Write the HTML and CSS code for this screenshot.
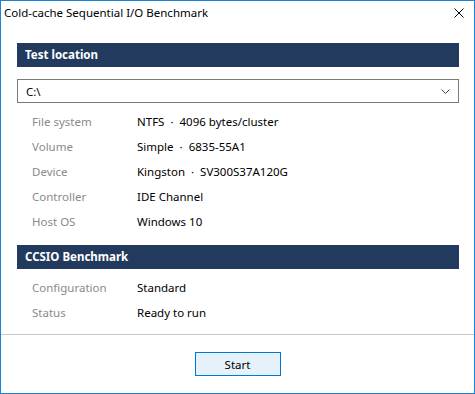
FILE: index.html
```html
<!DOCTYPE html>
<html lang="en">
<head>
    <meta charset="UTF-8">
    <title>Cold-cache Sequential I/O Benchmark</title>
    <link rel="stylesheet" href="styles.css">
</head>
<body>
    <div class="window">
        <div class="titlebar">
            <span class="title">Cold-cache Sequential I/O Benchmark</span>
            <svg class="close" width="10" height="10" viewBox="0 0 10 10">
                <path d="M0.5 0.5 L9.5 9.5 M9.5 0.5 L0.5 9.5" stroke="#000" stroke-width="1" fill="none"/>
            </svg>
        </div>
        <div class="content">
            <div class="section-header first">Test location</div>
            <div class="combo">
                <span>C:\</span>
                <svg class="chevron" width="9" height="5" viewBox="0 0 9 5">
                    <path d="M0.5 0.5 L4.5 4.5 L8.5 0.5" stroke="#404040" stroke-width="1" fill="none"/>
                </svg>
            </div>
            <div class="rows">
                <div class="row"><span class="label">File system</span><span class="value">NTFS <span class="dot">·</span> 4096 bytes/cluster</span></div>
                <div class="row"><span class="label">Volume</span><span class="value">Simple <span class="dot">·</span> 6835-55A1</span></div>
                <div class="row"><span class="label">Device</span><span class="value">Kingston <span class="dot">·</span> SV300S37A120G</span></div>
                <div class="row"><span class="label">Controller</span><span class="value">IDE Channel</span></div>
                <div class="row"><span class="label">Host OS</span><span class="value">Windows 10</span></div>
            </div>
            <div class="section-header second">CCSIO Benchmark</div>
            <div class="rows bench">
                <div class="row"><span class="label">Configuration</span><span class="value">Standard</span></div>
                <div class="row"><span class="label">Status</span><span class="value">Ready to run</span></div>
            </div>
        </div>
        <div class="footer">
            <button class="start-button">Start</button>
        </div>
    </div>
</body>
</html>
```

FILE: styles.css
```css
body {
    margin: 0;
    padding: 0;
    font-family: "Noto Sans", "Open Sans", sans-serif;
    font-size: 11.5px;
    color: #000;
    background-color: #fff;
}
.window {
    width: 475px;
    height: 394px;
    box-sizing: border-box;
    border: 1px solid #1883d7;
    display: flex;
    flex-direction: column;
    background-color: #fff;
}
.titlebar {
    height: 30px;
    box-sizing: border-box;
    display: flex;
    align-items: center;
    justify-content: space-between;
    padding: 0 10px 6px 3px;
}
.title {
    line-height: 16px;
}
.content {
    flex: 1;
    padding: 12px 15px 0 16px;
}
.section-header {
    height: 24px;
    line-height: 24px;
    background-color: #223a5e;
    color: #fff;
    font-weight: bold;
    padding-left: 8px;
}
.section-header.second {
    margin-top: 11px;
}
.combo {
    margin-top: 12px;
    height: 24px;
    box-sizing: border-box;
    border: 1px solid #7a7a7a;
    display: flex;
    align-items: center;
    justify-content: space-between;
    padding: 0 8px 0 8px;
}
.rows {
    margin-top: 6px;
}
.row {
    display: flex;
    height: 25px;
    align-items: center;
}
.label {
    width: 105px;
    padding-left: 15px;
    color: #8a8a8a;
}
.value .dot {
    margin: 0 3px;
}
.footer {
    border-top: 1px solid #c8c8c8;
    height: 58px;
    display: flex;
    justify-content: center;
    align-items: center;
}
.start-button {
    width: 86px;
    height: 24px;
    background-color: #e5f1fb;
    border: 1px solid #0078d7;
    font-family: "Noto Sans", "Open Sans", sans-serif;
    font-size: 11.5px;
    color: #000;
    padding: 0;
}
```
